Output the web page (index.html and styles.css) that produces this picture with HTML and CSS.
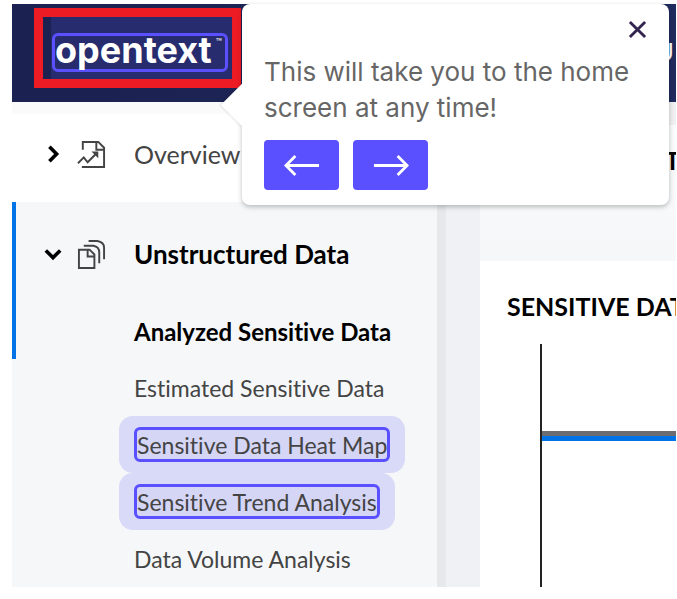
FILE: index.html
```html
<!DOCTYPE html>
<html lang="en">
<head>
    <meta charset="UTF-8">
    <meta name="viewport" content="width=device-width, initial-scale=1.0">
    <title>Analyzed Sensitive Data</title>
    <link rel="stylesheet" href="styles.css">
</head>
<body>
    <div class="app">
        <header class="header">
            <div class="frame">
                <a class="logo-link" href="#"><span class="logo">opentext<small>™</small></span></a>
            </div>
            <span class="header-title">U</span>
        </header>

        <div class="content">
            <nav class="sidebar">
                <a class="nav-row" href="#">
                    <svg class="chevron" viewBox="0 0 20 20"><path d="M6 2l8 8-8 8"/></svg>
                    <svg class="icon" viewBox="0 0 30 30"><path d="M6 10V2h16l6 6v20H5M20 2v8h8M1 24l6-6 4 5 8-8"/><path class="solid" d="M15 12h7v7z"/></svg>
                    <span>Overview</span>
                </a>
                <div class="nav-group">
                    <div class="group-current">
                        <a class="nav-row group-title" href="#">
                            <svg class="chevron" viewBox="0 0 20 20"><path d="M2 6l8 8 8-8"/></svg>
                            <svg class="icon" viewBox="0 0 30 30"><path d="M2 10h11l5 5v14H2zM11 10v7h7M7 6h10q6 1 6 7v11M12 1h9q7 1 7 7v12"/></svg>
                            <span>Unstructured Data</span>
                        </a>
                        <a class="nav-item current" href="#">Analyzed Sensitive Data</a>
                    </div>
                    <a class="nav-item" href="#">Estimated Sensitive Data</a>
                    <div class="halo"><a class="marked" href="#">Sensitive Data Heat Map</a></div>
                    <div class="halo"><a class="marked" href="#">Sensitive Trend Analysis</a></div>
                    <a class="nav-item" href="#">Data Volume Analysis</a>
                </div>
            </nav>

            <main class="main">
                <div class="toolbar">
                    <h1>T</h1>
                </div>
                <section class="card">
                    <h2>SENSITIVE DATA</h2>
                    <div class="chart">
                        <div class="series gray"></div>
                        <div class="series blue"></div>
                    </div>
                </section>
            </main>
        </div>
    </div>

    <div class="tooltip" role="dialog" aria-label="Home">
        <button class="close" aria-label="Close">
            <svg viewBox="0 0 20 20"><path d="M2 2l16 16M18 2L2 18"/></svg>
        </button>
        <p>This will take you to the home screen at any time!</p>
        <div class="buttons">
            <button class="step" aria-label="Previous">
                <svg viewBox="0 0 38 24"><path d="M37 12H3M12 2L2 12l10 10"/></svg>
            </button>
            <button class="step" aria-label="Next">
                <svg viewBox="0 0 38 24"><path d="M1 12h34M26 2l10 10-10 10"/></svg>
            </button>
        </div>
    </div>
</body>
</html>
```

FILE: styles.css
```css
* {
    box-sizing: border-box;
}

body {
    margin: 0;
    padding: 4px 1px 13px 12px;
    min-height: 100vh;
    display: flex;
    background: #fff;
    font-family: Lato, sans-serif;
    font-size: 23px;
    font-variant-ligatures: none;
    color: #444;
    position: relative;
}

a {
    color: inherit;
    text-decoration: none;
}

h1, h2, p {
    margin: 0;
}

svg {
    fill: none;
    stroke: currentColor;
}

.app {
    flex: 1;
    min-width: 0;
    display: flex;
    flex-direction: column;
    overflow: hidden;
}

.header {
    height: 98px;
    padding: 4px 0 0 22px;
    display: flex;
    justify-content: space-between;
    background: linear-gradient(90deg, #1b2150, #1f2b5e);
    color: #fff;
}

.frame {
    display: flex;
    height: 80px;
    border: 9px solid #ed1c24;
    padding-left: 8px;
}

.logo-link {
    display: flex;
    align-items: center;
    padding: 8px 4px 0 1px;
    background: #262c6e;
}

.logo {
    display: flex;
    width: 176px;
    height: 39px;
    border: 3px solid #5a50ff;
    border-radius: 6px;
    font-family: Inter, sans-serif;
    font-size: 36px;
    font-weight: 700;
    line-height: 28px;
}

.logo small {
    margin-left: 4px;
    font-size: 10px;
    font-weight: 400;
    line-height: 12px;
}

.header-title {
    padding: 28px 2px 0 0;
    font-size: 25px;
}

.content {
    flex: 1;
    display: flex;
}

.sidebar {
    width: 434px;
    flex-shrink: 0;
    display: flex;
    flex-direction: column;
    border-right: 9px solid #e7e8ea;
    border-top: 12px solid #fafafa;
}

.nav-row {
    display: flex;
    align-items: center;
    height: 80px;
    padding-left: 32px;
    font-size: 25px;
}

.nav-row .chevron {
    width: 18px;
    height: 18px;
    stroke-width: 4;
    margin-right: 15px;
    color: #000;
}

.nav-row .icon {
    width: 29px;
    height: 29px;
    stroke-width: 2;
    margin-right: 28px;
}

.icon .solid {
    fill: currentColor;
    stroke: none;
}

.nav-group {
    flex: 1;
    margin-top: 8px;
    background: #f5f7f9;
}

.group-current {
    border-left: 4px solid #0073e7;
    height: 157px;
}

.nav-row.group-title {
    height: 104px;
    padding-left: 28px;
    font-size: 26px;
}

.group-title span, .current {
    font-weight: 700;
    color: #000;
}

.nav-item {
    display: flex;
    align-items: center;
    height: 57px;
    padding-left: 122px;
}

.group-current .nav-item {
    height: 50px;
    padding-left: 118px;
    font-size: 24px;
}

.halo {
    display: flex;
    width: fit-content;
    height: 57px;
    margin-left: 107px;
    padding: 11px 15px;
    border-radius: 14px;
    background: #d9d9f8;
}

.marked {
    border: 3px solid #5a50ff;
    border-radius: 6px;
    line-height: 30px;
    background: #d5d5f6;
}

.main {
    flex: 1;
    min-width: 0;
    display: flex;
    flex-direction: column;
    border-left: 34px solid #f0f1f4;
}

.toolbar {
    height: 159px;
    padding: 19px 0 0 185px;
    border-top: 23px solid #f0f0f2;
    background: linear-gradient(#fafbfb, #f5f7f9);
    overflow: hidden;
}

h1, h2 {
    font-size: 25px;
    line-height: 32px;
    color: #000;
    white-space: nowrap;
}

.card {
    flex: 1;
    display: flex;
    flex-direction: column;
    padding: 29px 0 0 27px;
    overflow: hidden;
}

.chart {
    flex: 1;
    margin: 22px 0 0 33px;
    padding-top: 87px;
    border-left: 2px solid #222;
}

.series {
    height: 5px;
}

.gray {
    background: #6b6d70;
}

.blue {
    background: #0073e7;
}

/* tour step shown over the page */
.tooltip {
    position: absolute;
    top: 4px;
    left: 242px;
    width: 427px;
    padding: 50px 22px 15px;
    border-radius: 8px;
    background: #fff;
    box-shadow: 0 2px 5px rgba(0, 0, 0, 0.25);
    font-family: Inter, sans-serif;
    font-size: 26px;
    line-height: 36px;
    color: #666;
}

.tooltip::before {
    content: "";
    position: absolute;
    left: -15px;
    top: 86px;
    width: 30px;
    height: 30px;
    background: #fff;
    box-shadow: -1px 1px 2px rgba(0, 0, 0, 0.1);
    transform: rotate(45deg);
}

.tooltip p {
    position: relative;
}

.buttons {
    display: flex;
    gap: 14px;
    margin-top: 14px;
}

button {
    border: none;
    padding: 0;
    cursor: pointer;
}

.step {
    display: flex;
    align-items: center;
    justify-content: center;
    width: 75px;
    height: 50px;
    border-radius: 4px;
    background: #5a50ff;
    color: #fff;
}

.step svg {
    width: 36px;
    height: 23px;
    stroke-width: 3;
}

.close {
    position: absolute;
    top: 16px;
    right: 22px;
    background: none;
    color: #33254f;
    line-height: 0;
}

.close svg {
    width: 19px;
    height: 19px;
    stroke-width: 3;
}
```
